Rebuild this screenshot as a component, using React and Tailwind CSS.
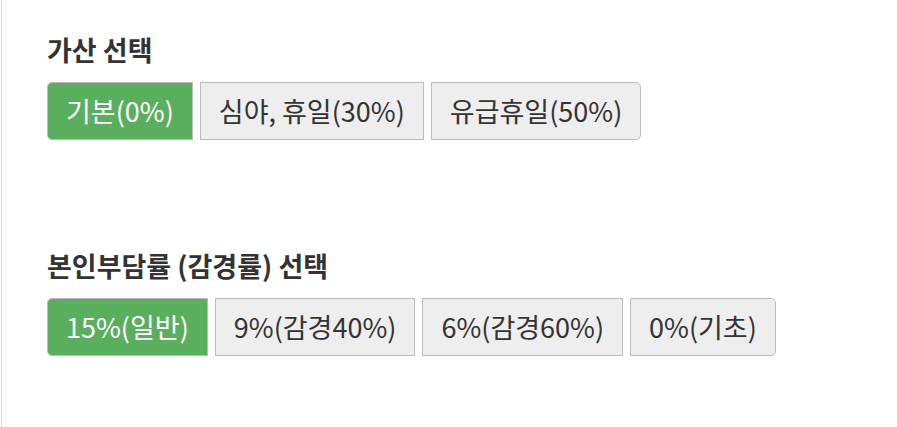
import React, { useState } from 'react';

const SURCHARGE = ['기본(0%)', '심야, 휴일(30%)', '유급휴일(50%)'];
const COPAY = ['15%(일반)', '9%(감경40%)', '6%(감경60%)', '0%(기초)'];

function OptionGroup({ title, options, value, onChange }) {
  return (
    <div>
      <h3 className="text-[27px] font-bold leading-[40px] text-[#333333]">{title}</h3>
      <div className="mt-[12px] flex gap-[7px]">
        {options.map((opt, i) => {
          const active = i === value;
          const first = i === 0;
          const last = i === options.length - 1;
          return (
            <button
              key={opt}
              onClick={() => onChange(i)}
              className={`border border-[#bbbbbb] px-[18px] py-[8px] text-[27px] leading-[40px] ${
                active ? 'bg-[#5aaf5f] text-white' : 'bg-[#eeeeee] text-[#333333]'
              } ${first ? 'rounded-l-[5px]' : ''} ${last ? 'rounded-r-[5px]' : ''}`}
            >
              {opt}
            </button>
          );
        })}
      </div>
    </div>
  );
}

export default function App() {
  const [surcharge, setSurcharge] = useState(0);
  const [copay, setCopay] = useState(0);

  return (
    <div className="h-[427px] w-[897px] bg-white" style={{ fontFamily: '"Noto Sans CJK KR", "Noto Sans", sans-serif' }}>
      <div className="ml-px h-full border-l border-[#dddddd] pl-[45px] pt-[30px]">
        <OptionGroup title="가산 선택" options={SURCHARGE} value={surcharge} onChange={setSurcharge} />
        <div className="mt-[106px]">
          <OptionGroup title="본인부담률 (감경률) 선택" options={COPAY} value={copay} onChange={setCopay} />
        </div>
      </div>
    </div>
  );
}
